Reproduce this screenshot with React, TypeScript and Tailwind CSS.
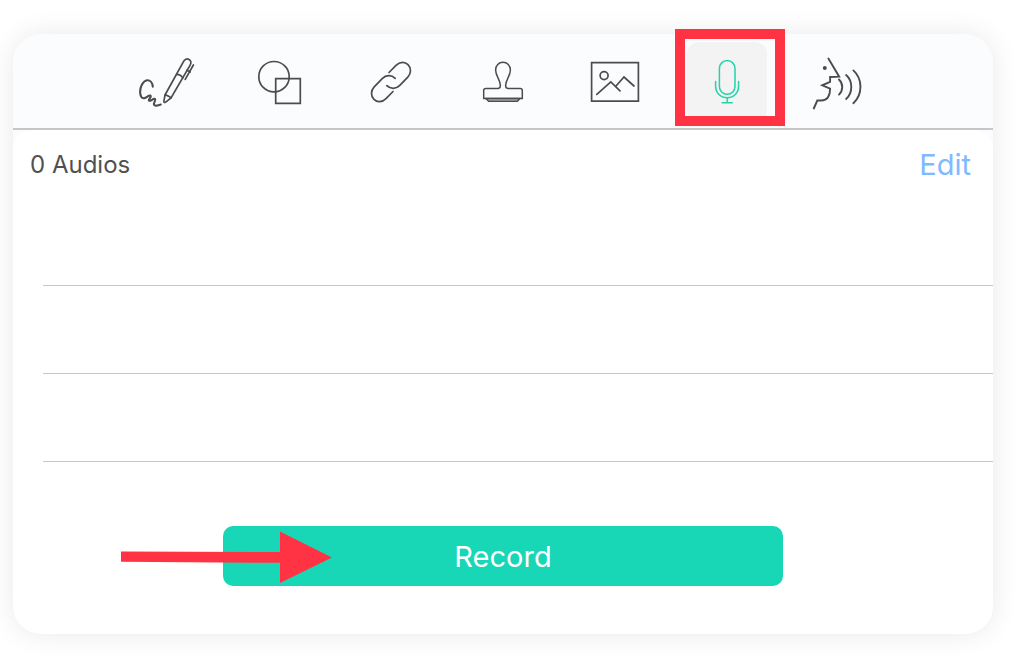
import type { ReactNode } from "react";

type Tool = { name: string; active?: boolean; icon: ReactNode };

const tools: Tool[] = [
  {
    name: "Signature",
    icon: (
      <>
        <path d="M25.8 44.6C25.4 40.8 23.2 38 20.2 38.2C15.8 38.8 13 45 13.1 50C13.2 54 14.6 56.6 17.2 56.2C19.6 55.6 21.4 53.2 23.2 53.6C25.4 54.4 20.6 58 22.2 58.8C24 59.2 26.4 56 28 57C29.4 58.4 25.6 61.2 27.2 63C29 64.6 31.4 63.2 33.8 62.6" strokeWidth="2.1" />
        <path d="M38 53L56.2 20.2C57.5 17.2 60 16.2 62 17.4C64.2 18.6 64.4 21 63 23.4L44 56L38.4 60.3C37.4 60.8 36.8 60.3 36.9 59.2Z" />
        <path d="M38 53.2C39.8 53 42.8 54.4 43.8 56M49.6 32.4C51.8 32.4 54.6 34 55.8 36M60 28.2L63.2 30M66.4 23L58.2 37.4" />
      </>
    ),
  },
  {
    name: "Shapes",
    icon: (
      <>
        <circle cx="35" cy="34.7" r="15.2" />
        <path d="M36.7 36.7H61.3V61.3H36.7Z" />
      </>
    ),
  },
  {
    name: "Link",
    icon: (
      <>
        <path d="M38 30.5L45 23.4C49 19.3 54 19.5 57 22.6C60.4 26 60.3 31.4 56.8 35.2L48.8 43.4C45 47.2 39.6 47.4 35.8 43.7" />
        <path d="M42 49.5L35 56.6C31 60.7 26 60.5 23 57.4C19.6 54 19.7 48.6 23.2 44.8L31.2 36.6C35 32.8 40.4 32.6 44.2 36.3" />
      </>
    ),
  },
  {
    name: "Stamp",
    icon: (
      <>
        <path d="M23 56.5L25.6 59.3H54.4L57 56.5Z" fill="#c7c7cb" strokeWidth="1.4" />
        <path d="M20.7 56.4V48.5Q20.7 46.4 22.8 46.4H34.6Q37.4 46.4 37.4 43.4C37.4 38 32.6 34 32.6 28C32.6 23.5 35.8 20.3 40 20.3C44.2 20.3 47.4 23.5 47.4 28C47.4 34 42.6 38 42.6 43.4Q42.6 46.4 45.4 46.4H57.2Q59.3 46.4 59.3 48.5V56.4Z" strokeWidth="1.5" />
      </>
    ),
  },
  {
    name: "Image",
    icon: (
      <>
        <path d="M16.6 20.6H63.4V59.2H16.6Z" strokeLinejoin="miter" />
        <circle cx="29.1" cy="33.6" r="4" />
        <path d="M21.8 52.4L35.8 39.8L45 48.8M40.8 44.2L49 35L59 44" />
      </>
    ),
  },
  {
    name: "Audio",
    active: true,
    icon: (
      <>
        <rect x="32.4" y="18.6" width="15.6" height="33.6" rx="7.8" strokeWidth="1.5" />
        <path d="M28.6 39.5V44C28.6 51 33.6 55.7 40.2 55.7C46.8 55.7 51.6 51 51.6 44V39.5M40.2 56V60.7M35.2 60.7H45.2" strokeWidth="1.5" />
      </>
    ),
  },
  {
    name: "Speech",
    icon: (
      <>
        <circle cx="25.8" cy="26" r="2" fill="currentColor" stroke="none" />
        <path d="M29.4 16.5L40.2 34.7L31.1 35V39.8L23.2 43.3L31.1 46.6C31.2 53.5 28.6 58.5 22 58.5H18.3L14.8 66.5" strokeWidth="1.9" />
        <path d="M40 37.5C44.3 41.5 44.3 48.5 40 52.6M47.1 33C54 39 54 51 47.1 57M54.4 28.4C63.8 37 63.8 52.6 54.4 61.2" strokeWidth="1.9" />
      </>
    ),
  },
];

function ToolButton({ tool }: { tool: Tool }) {
  return (
    <div className="relative h-20 min-w-0 flex-1">
      <button
        type="button"
        aria-label={tool.name}
        aria-pressed={!!tool.active}
        className={
          tool.active
            ? "flex h-full w-full items-center justify-center rounded-xl bg-[#f3f3f3] text-[#22d3ab]"
            : "flex h-full w-full items-center justify-center text-[#4c4c4e]"
        }
      >
        <svg
          viewBox="0 0 80 80"
          className="h-20 w-20 shrink-0"
          fill="none"
          stroke="currentColor"
          strokeWidth="1.7"
          strokeLinecap="round"
          aria-hidden="true"
        >
          {tool.icon}
        </svg>
      </button>
      {tool.active && (
        <div className="pointer-events-none absolute -top-[13px] -right-[18px] -bottom-1 -left-3 border-10 border-[#ff3344]" />
      )}
    </div>
  );
}

export default function App() {
  return (
    <div className="min-h-screen bg-white pt-[34px] pr-8 pb-[34px] pl-[13px] font-['Inter','Liberation_Sans',sans-serif]">
      <main className="rounded-[28px] bg-[#fbfcfe] shadow-[0_0_28px_rgba(0,0,0,0.09)]">
        <header className="flex justify-center border-b-2 border-[#c6c6c8] px-4 pt-2 pb-1.5">
          <nav aria-label="Tools" className="flex w-full max-w-[752px] gap-8">
            {tools.map((tool) => (
              <ToolButton key={tool.name} tool={tool} />
            ))}
          </nav>
        </header>

        <section className="rounded-t-[20px] rounded-b-[28px] bg-white pb-12">
          <div className="flex h-[68px] items-center justify-between pt-0.5 pr-[22px] pl-[17px]">
            <h1 className="text-2xl text-[#505052]">0 Audios</h1>
            <button type="button" className="text-[29px] text-[#7fb9ff]">
              Edit
            </button>
          </div>

          <ul className="ml-[30px]">
            <li className="h-[88px] border-b border-[#c6c6c8]" />
            <li className="h-[88px] border-b border-[#c6c6c8]" />
            <li className="h-[88px] border-b border-[#c6c6c8]" />
          </ul>

          <div className="flex justify-center pt-16">
            <div className="relative w-full max-w-[560px]">
              <button
                type="button"
                className="h-[60px] w-full rounded-[10px] bg-[#18d7b7] pt-0.5 text-[29px] text-white"
              >
                Record
              </button>
              <svg
                viewBox="0 0 212 52"
                className="pointer-events-none absolute top-[5px] -left-[102px] h-[52px] w-[212px]"
                fill="#ff3344"
                aria-hidden="true"
              >
                <path d="M0 20.4L159 21V0.5L211 26.5L159 52V31.8L0 30.8Z" />
              </svg>
            </div>
          </div>
        </section>
      </main>
    </div>
  );
}
